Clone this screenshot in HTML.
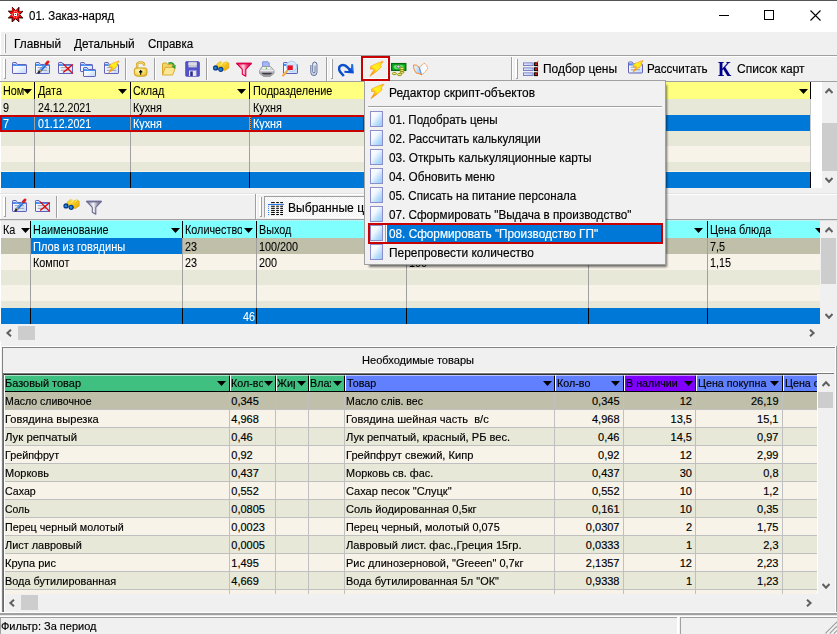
<!DOCTYPE html>
<html><head><meta charset="utf-8"><title>01. Заказ-наряд</title><style>
html,body{margin:0;padding:0}
body{width:837px;height:634px;overflow:hidden;background:#f0f0f0;position:relative;font-family:"Liberation Sans",sans-serif;color:#000}
body div,body svg,body span.t{position:absolute}
.t{white-space:pre;line-height:1;display:block;-webkit-text-stroke:0.16px currentColor}
</style></head><body>
<div style="left:0px;top:0px;width:837px;height:1px;background:#555555;"></div>
<div style="left:0px;top:1px;width:837px;height:31px;background:#ffffff;"></div>
<span class="t" style="font-size:12px;left:29px;top:10.0px;transform:scaleX(0.9592);transform-origin:0 0">01. Заказ-наряд</span>
<svg style="left:7px;top:6px" width="18" height="18" viewBox="0 0 18 18"><g transform="translate(0.5,0.5)"><polygon points="4.6,0.6 8,3.9 11.4,0.6 11.2,4.8 15.4,4.6 12.1,8 15.4,11.4 11.2,11.2 11.4,15.4 8,12.1 4.6,15.4 4.8,11.2 0.6,11.4 3.9,8 0.6,4.6 4.8,4.8" fill="#000" transform="translate(0.35,0.35)"/><polygon points="4.6,0.6 8,3.9 11.4,0.6 11.2,4.8 15.4,4.6 12.1,8 15.4,11.4 11.2,11.2 11.4,15.4 8,12.1 4.6,15.4 4.8,11.2 0.6,11.4 3.9,8 0.6,4.6 4.8,4.8" fill="#ff0000" stroke="#200000" stroke-width="0.3"/><path d="M4.6 0.6 L8 3.9 M11.4 0.6 L11.2 4.8 M15.4 4.6 L12.1 8 M15.4 11.4 H11.4 M11.4 15.4 L8 12.1 M4.6 15.4 V11.2 M0.6 11.4 H4.6 M0.6 4.6 H4.6" stroke="#000" stroke-width="0.7" fill="none"/><path d="M8 4.3 L11.7 8 L8 11.7 L4.3 8Z" fill="none" stroke="#fff" stroke-width="1" stroke-dasharray="0.9 0.85"/><rect x="6.5" y="6.5" width="3" height="3" fill="#fff"/><rect x="7.5" y="7.5" width="1" height="1" fill="#f00"/></g></svg>
<div style="left:719px;top:15px;width:10px;height:1px;background:#000;"></div>
<div style="left:764px;top:10px;width:10px;height:10px;background:transparent;border:1px solid #000;box-sizing:border-box"></div>
<svg style="left:810px;top:10px" width="11" height="11" viewBox="0 0 11 11"><path d="M0.5 0.5L10.5 10.5M10.5 0.5L0.5 10.5" stroke="#000" stroke-width="1.1"/></svg>
<div style="left:0px;top:32px;width:1px;height:580px;background:#ffffff;"></div>
<div style="left:4px;top:34px;width:1px;height:19px;background:#ffffff;"></div>
<div style="left:5px;top:34px;width:1px;height:19px;background:#a0a0a0;"></div>
<span class="t" style="font-size:12px;left:14.3px;top:38.0px;transform:scaleX(0.9865);transform-origin:0 0">Главный</span>
<span class="t" style="font-size:12px;left:74px;top:38.0px;transform:scaleX(0.9845);transform-origin:0 0">Детальный</span>
<span class="t" style="font-size:12px;left:147.5px;top:38.0px;transform:scaleX(0.9601);transform-origin:0 0">Справка</span>
<div style="left:0px;top:55px;width:837px;height:1px;background:#a0a0a0;"></div>
<div style="left:0px;top:56px;width:837px;height:1px;background:#ffffff;"></div>
<div style="left:3px;top:59px;width:2px;height:19px;background:#ffffff;"></div>
<div style="left:5px;top:59px;width:1px;height:20px;background:#a0a0a0;"></div>
<div style="left:4px;top:78px;width:1px;height:1px;background:#a0a0a0;"></div>
<div style="left:125px;top:58px;width:1px;height:22px;background:#a0a0a0;"></div>
<div style="left:126px;top:58px;width:1px;height:22px;background:#ffffff;"></div>
<div style="left:154px;top:58px;width:1px;height:22px;background:#a0a0a0;"></div>
<div style="left:155px;top:58px;width:1px;height:22px;background:#ffffff;"></div>
<div style="left:206px;top:58px;width:1px;height:22px;background:#a0a0a0;"></div>
<div style="left:207px;top:58px;width:1px;height:22px;background:#ffffff;"></div>
<div style="left:326px;top:57px;width:1px;height:24px;background:#a0a0a0;"></div>
<div style="left:327px;top:57px;width:1px;height:24px;background:#ffffff;"></div>
<div style="left:330px;top:59px;width:2px;height:19px;background:#ffffff;"></div>
<div style="left:332px;top:59px;width:1px;height:20px;background:#a0a0a0;"></div>
<div style="left:331px;top:78px;width:1px;height:1px;background:#a0a0a0;"></div>
<div style="left:511px;top:57px;width:1px;height:24px;background:#a0a0a0;"></div>
<div style="left:512px;top:57px;width:1px;height:24px;background:#ffffff;"></div>
<div style="left:515px;top:59px;width:2px;height:19px;background:#ffffff;"></div>
<div style="left:517px;top:59px;width:1px;height:20px;background:#a0a0a0;"></div>
<div style="left:516px;top:78px;width:1px;height:1px;background:#a0a0a0;"></div>
<span class="t" style="font-size:12px;left:543px;top:63.0px;transform:scaleX(0.9978);transform-origin:0 0">Подбор цены</span>
<span class="t" style="font-size:12px;left:646.5px;top:63.0px;transform:scaleX(0.9677);transform-origin:0 0">Рассчитать</span>
<span class="t" style="font-size:12px;left:736.5px;top:63.0px;transform:scaleX(1.0036);transform-origin:0 0">Список карт</span>
<div style="left:361px;top:56px;width:29px;height:25px;background:#f0f0f0;border:2px solid #c80000;box-sizing:border-box;box-shadow:inset 0 0 0 1px #fcffff"></div>
<svg style="left:12px;top:60px" width="18" height="18" viewBox="0 0 18 18"><defs><linearGradient id="g1" x1="0" y1="0" x2="1" y2="1"><stop offset="0" stop-color="#ffffff"/><stop offset="0.5" stop-color="#eef4fd"/><stop offset="1" stop-color="#bcd6f7"/></linearGradient></defs><path d="M0.5 13.0 V3.1 Q0.5 2.5 1.1 2.5 H4.1 L5.3 4.5 H13.9 Q14.5 4.5 14.5 5.1 V12.9 Q14.5 13.5 13.9 13.5 H1.1 Q0.5 13.5 0.5 12.9Z" fill="url(#g1)" stroke="#6262bd" stroke-width="1"/><path d="M1.0 3.7 H4.1 L4.9 5.1 H14.0 V5.9 H1.0Z" fill="#4a93f5"/></svg>
<svg style="left:35px;top:60px" width="18" height="18" viewBox="0 0 18 18"><defs><linearGradient id="g2" x1="0" y1="0" x2="1" y2="1"><stop offset="0" stop-color="#ffffff"/><stop offset="0.5" stop-color="#eef4fd"/><stop offset="1" stop-color="#bcd6f7"/></linearGradient></defs><path d="M0.5 13.0 V3.1 Q0.5 2.5 1.1 2.5 H4.1 L5.3 4.5 H13.9 Q14.5 4.5 14.5 5.1 V12.9 Q14.5 13.5 13.9 13.5 H1.1 Q0.5 13.5 0.5 12.9Z" fill="url(#g2)" stroke="#6262bd" stroke-width="1"/><path d="M1.0 3.7 H4.1 L4.9 5.1 H14.0 V5.9 H1.0Z" fill="#4a93f5"/><path d="M2.7 7.7 H12.1 M2.7 10.3 H12.1" stroke="#9a9aa8" stroke-width="1"/><path d="M4.6 11.6 L11.8 3.3" stroke="#2f6fd6" stroke-width="2.8" stroke-linecap="butt"/><path d="M4.3 11.0 L11.8 2.4" stroke="#7db2f5" stroke-width="0.9"/><path d="M3.0 13.2 L5.0 11.0" stroke="#2a2a2a" stroke-width="2.2"/><path d="M5.0 11.2 L5.9 10.2" stroke="#c8a060" stroke-width="2.4"/><path d="M11.4 3.8 L13.0 1.9" stroke="#e01818" stroke-width="2.8" stroke-linecap="round"/></svg>
<svg style="left:58px;top:60px" width="18" height="18" viewBox="0 0 18 18"><defs><linearGradient id="g3" x1="0" y1="0" x2="1" y2="1"><stop offset="0" stop-color="#ffffff"/><stop offset="0.5" stop-color="#eef4fd"/><stop offset="1" stop-color="#bcd6f7"/></linearGradient></defs><path d="M0.5 13.0 V3.1 Q0.5 2.5 1.1 2.5 H4.1 L5.3 4.5 H13.9 Q14.5 4.5 14.5 5.1 V12.9 Q14.5 13.5 13.9 13.5 H1.1 Q0.5 13.5 0.5 12.9Z" fill="url(#g3)" stroke="#6262bd" stroke-width="1"/><path d="M1.0 3.7 H4.1 L4.9 5.1 H14.0 V5.9 H1.0Z" fill="#4a93f5"/><path d="M2.7 7.7 H12.1 M2.7 10.3 H12.1" stroke="#9a9aa8" stroke-width="1"/><path d="M5 3.6 L14.8 13.6 M14.8 4.4 L5.2 12.4" stroke="#e80000" stroke-width="1.3"/></svg>
<svg style="left:80px;top:60px" width="18" height="18" viewBox="0 0 18 18"><defs><linearGradient id="g4" x1="0" y1="0" x2="1" y2="1"><stop offset="0" stop-color="#ffffff"/><stop offset="0.5" stop-color="#eef4fd"/><stop offset="1" stop-color="#bcd6f7"/></linearGradient></defs><path d="M0.5 11.0 V3.1 Q0.5 2.5 1.1 2.5 H4.1 L5.3 4.5 H11.9 Q12.5 4.5 12.5 5.1 V10.9 Q12.5 11.5 11.9 11.5 H1.1 Q0.5 11.5 0.5 10.9Z" fill="url(#g4)" stroke="#6262bd" stroke-width="1"/><path d="M1.0 3.7 H4.1 L4.9 5.1 H12.0 V5.9 H1.0Z" fill="#4a93f5"/><defs><linearGradient id="g5" x1="0" y1="0" x2="1" y2="1"><stop offset="0" stop-color="#ffffff"/><stop offset="0.5" stop-color="#eef4fd"/><stop offset="1" stop-color="#bcd6f7"/></linearGradient></defs><path d="M3.5 16.0 V8.1 Q3.5 7.5 4.1 7.5 H7.1 L8.3 9.5 H14.9 Q15.5 9.5 15.5 10.1 V15.9 Q15.5 16.5 14.9 16.5 H4.1 Q3.5 16.5 3.5 15.9Z" fill="url(#g5)" stroke="#6262bd" stroke-width="1"/><path d="M4.0 8.7 H7.1 L7.9 10.1 H15.0 V10.9 H4.0Z" fill="#4a93f5"/></svg>
<svg style="left:104px;top:60px" width="18" height="18" viewBox="0 0 18 18"><defs><linearGradient id="g6" x1="0" y1="0" x2="1" y2="1"><stop offset="0" stop-color="#ffffff"/><stop offset="0.5" stop-color="#eef4fd"/><stop offset="1" stop-color="#bcd6f7"/></linearGradient></defs><path d="M0.5 13.0 V3.1 Q0.5 2.5 1.1 2.5 H4.1 L5.3 4.5 H13.9 Q14.5 4.5 14.5 5.1 V12.9 Q14.5 13.5 13.9 13.5 H1.1 Q0.5 13.5 0.5 12.9Z" fill="url(#g6)" stroke="#6262bd" stroke-width="1"/><path d="M1.0 3.7 H4.1 L4.9 5.1 H14.0 V5.9 H1.0Z" fill="#4a93f5"/><path d="M2.7 7.7 H12.1 M2.7 10.3 H12.1" stroke="#9a9aa8" stroke-width="1"/><defs><linearGradient id="g7" x1="0.9" y1="0" x2="0.1" y2="1"><stop offset="0" stop-color="#ffb020"/><stop offset="0.18" stop-color="#ffe818"/><stop offset="0.5" stop-color="#fff020"/><stop offset="0.72" stop-color="#ffb010"/><stop offset="1" stop-color="#f07000"/></linearGradient></defs><path d="M14.96 0.92 L12.08 1.88 L7.76 3.64 L5.12 5.08 L5.12 7.16 L8.08 7.32 L4.56 12.92 L9.68 9.24 L12.88 6.52 L13.84 4.92 L12.88 4.28 L15.20 1.24Z" fill="url(#g7)" stroke="#f59a18" stroke-width="0.6" stroke-linejoin="round"/></svg>
<svg style="left:133px;top:60px" width="18" height="18" viewBox="0 0 18 18"><defs><radialGradient id="g8" cx="0.4" cy="0.35" r="0.75"><stop offset="0" stop-color="#fffbd0"/><stop offset="0.55" stop-color="#f8dc60"/><stop offset="1" stop-color="#e0b030"/></radialGradient></defs><path d="M4.1 9 V5 Q4.1 2.4 7.6 2.4 Q11 2.4 11 4.6 V5.8" fill="none" stroke="#cfa020" stroke-width="2.4"/><path d="M4.1 9 V5 Q4.1 2.4 7.6 2.4 Q11 2.4 11 4.6 V5.6" fill="none" stroke="#fbe27a" stroke-width="0.9"/><path d="M3 8 H12.2 Q14 8 14 10 V13 Q14 16.2 11 16.2 H4.4 Q1.3 16.2 1.3 13 V10 Q1.3 8 3 8Z" fill="url(#g8)" stroke="#cfa020" stroke-width="1"/><path d="M7.7 14.8 V11 M6.2 12.4 L7.7 10.6 L9.2 12.4" fill="none" stroke="#000" stroke-width="1.1"/></svg>
<svg style="left:161px;top:60px" width="18" height="18" viewBox="0 0 18 18"><path d="M1.5 15 V4.2 Q1.5 3 2.6 3 H5.6 L6.8 4.6 H11.5 V7" fill="#f2d468" stroke="#d4a62a" stroke-width="1"/><path d="M1.5 15 L4.2 7.4 H14.6 L11.6 15Z" fill="#fae694" stroke="#d9ad32" stroke-width="1" stroke-linejoin="round"/><path d="M7.4 3.4 Q11.6 1.6 13 5.4" fill="none" stroke="#2ea02e" stroke-width="1.8"/><path d="M10.6 6 L15 5 L13.6 9Z" fill="#2ea02e"/></svg>
<svg style="left:185px;top:60px" width="18" height="18" viewBox="0 0 18 18"><path d="M0.7 2.2 Q0.7 1.6 1.4 1.6 H13.4 L14.4 2.6 V15.6 Q14.4 16.3 13.7 16.3 H1.4 Q0.7 16.3 0.7 15.6Z" fill="#5252cc" stroke="#4a4ab4" stroke-width="0.8"/><rect x="3.4" y="1.8" width="8.4" height="5.6" fill="#c8c8d4"/><path d="M3.4 4 H11.8" stroke="#e6e6ee" stroke-width="1.4"/><rect x="4" y="10.4" width="7.4" height="5.6" fill="#e8e8f0"/><rect x="5.2" y="11.4" width="2.6" height="4.6" fill="#30308a"/><path d="M4 10.4 H11.4 V16 " fill="none" stroke="#8a8ad8" stroke-width="0.8"/></svg>
<svg style="left:212px;top:60px" width="18" height="18" viewBox="0 0 18 18"><defs><linearGradient id="g9" x1="0" y1="0" x2="1" y2="1"><stop offset="0" stop-color="#ffe640"/><stop offset="1" stop-color="#e8a800"/></linearGradient></defs><path d="M4.6 4.2 L8.4 1.4 L11.4 3 L14.6 1.8 L16.8 3.2 V8 L12.6 10.8 L9.6 8.2 L6.2 8.8Z" fill="url(#g9)" stroke="#d8a000" stroke-width="0.6"/><path d="M8.6 1.6 L11.2 3 L8 5.2 M14.6 2 L12.4 4" stroke="#fff6a0" stroke-width="0.8" fill="none"/><circle cx="3.6" cy="7.9" r="2.6" fill="#0a3a8a"/><circle cx="3.4" cy="8.0" r="1.3" fill="#1e8ae0"/><circle cx="8.8" cy="9.3" r="2.6" fill="#0a3a8a"/><circle cx="8.6" cy="9.4" r="1.3" fill="#1e8ae0"/></svg>
<svg style="left:236px;top:60px" width="18" height="18" viewBox="0 0 18 18"><defs><linearGradient id="g10" x1="0" y1="0" x2="1" y2="0"><stop offset="0" stop-color="#e00048"/><stop offset="0.45" stop-color="#ffd0dc"/><stop offset="0.7" stop-color="#e84080"/><stop offset="1" stop-color="#d00040"/></linearGradient></defs><path d="M0.6 3.4 H15.4 L9.8 9.4 V16.3 L6.3 14.2 V9.4Z" fill="url(#g10)" stroke="#dc0046" stroke-width="1.1" stroke-linejoin="round"/><path d="M0.6 3.6 H15.4" stroke="#dc0046" stroke-width="1.6"/></svg>
<svg style="left:259px;top:60px" width="18" height="18" viewBox="0 0 18 18"><defs><linearGradient id="g11" x1="0" y1="0" x2="0" y2="1"><stop offset="0" stop-color="#e8e8ec"/><stop offset="1" stop-color="#9a9aa2"/></linearGradient></defs><path d="M3.6 7 V1.8 H9 L10.2 3 V7Z" fill="#a8b8f4" stroke="#7488e0" stroke-width="0.9"/><path d="M0.6 10.4 L3 6.6 H11.6 L15 10.4 V13.4 L11 16.4 H4.6 L0.6 13.4Z" fill="url(#g11)" stroke="#8c8c94" stroke-width="0.8"/><path d="M3.6 8.2 H11" stroke="#f6f6f8" stroke-width="1.6"/><circle cx="7.4" cy="8.3" r="0.8" fill="#30c030"/><path d="M4.4 14.6 H11.4 L13.6 12.8 H2.2Z" fill="#3a3a40"/><path d="M1 10.6 H14.6" stroke="#fafafa" stroke-width="0.8"/></svg>
<svg style="left:282px;top:60px" width="18" height="18" viewBox="0 0 18 18"><defs><linearGradient id="g12" x1="0" y1="0" x2="1" y2="1"><stop offset="0" stop-color="#ffffff"/><stop offset="0.5" stop-color="#eef4fd"/><stop offset="1" stop-color="#bcd6f7"/></linearGradient></defs><path d="M1.5 13.0 V3.1 Q1.5 2.5 2.1 2.5 H5.1 L6.3 4.5 H14.9 Q15.5 4.5 15.5 5.1 V12.9 Q15.5 13.5 14.9 13.5 H2.1 Q1.5 13.5 1.5 12.9Z" fill="url(#g12)" stroke="#6262bd" stroke-width="1"/><path d="M2.0 3.7 H5.1 L5.9 5.1 H15.0 V5.9 H2.0Z" fill="#4a93f5"/><circle cx="9.6" cy="6.4" r="5.2" fill="#d6e8fb" fill-opacity="0.92" stroke="#a8c8f0" stroke-width="1"/><rect x="5.4" y="5.4" width="5.4" height="4.6" fill="#e81020"/><path d="M5.2 10.8 L1.2 15.4" stroke="#f0a030" stroke-width="2.2" stroke-linecap="round"/><path d="M5.0 10.4 L1.2 14.8" stroke="#fbd890" stroke-width="0.7"/></svg>
<svg style="left:310px;top:60px" width="18" height="18" viewBox="0 0 18 18"><path d="M0.9 5 V12.6 Q0.9 15.5 3.9 15.5 Q6.9 15.5 6.9 12.6 V4.4 Q6.9 2.1 4.6 2.1 Q2.7 2.1 2.7 4.4 V11.8 Q2.7 13 3.9 13 Q5.1 13 5.1 11.8 V5.6" fill="none" stroke="#3f5286" stroke-width="0.9"/><path d="M1.8 5 V12.6 Q1.8 14.6 3.9 14.6 Q6 14.6 6 12.6 V4.4" fill="none" stroke="#b8c6e4" stroke-width="0.8"/></svg>
<svg style="left:338px;top:60px" width="18" height="18" viewBox="0 0 18 18"><path d="M5.8 16 L2 11.6 Q0.3 8.6 1.8 6.4 Q3.8 4.2 6.8 5.4 Q9 6.4 12.8 10.8" fill="none" stroke="#0a4fd0" stroke-width="2.5" stroke-linecap="butt" stroke-linejoin="round"/><path d="M14.1 4.2 L14.7 12.4 L6.4 11.7" fill="none" stroke="#0a4fd0" stroke-width="2" stroke-linejoin="miter"/><path d="M14.6 12.3 L14.2 6.5 L9 11.9Z" fill="#0a4fd0"/><path d="M13.9 5 L14.3 10.5" stroke="#3a8af0" stroke-width="0.9"/></svg>
<svg style="left:369px;top:60px" width="19" height="19" viewBox="0 0 19 19"><g transform="translate(0.3,0.3)"><defs><linearGradient id="g13" x1="0.9" y1="0" x2="0.1" y2="1"><stop offset="0" stop-color="#ffb020"/><stop offset="0.18" stop-color="#ffe818"/><stop offset="0.5" stop-color="#fff020"/><stop offset="0.72" stop-color="#ffb010"/><stop offset="1" stop-color="#f07000"/></linearGradient></defs><path d="M13.50 1.00 L9.90 2.20 L4.50 4.40 L1.20 6.20 L1.20 8.80 L4.90 9.00 L0.50 16.00 L6.90 11.40 L10.90 8.00 L12.10 6.00 L10.90 5.20 L13.80 1.40Z" fill="url(#g13)" stroke="#f59a18" stroke-width="0.6" stroke-linejoin="round"/></g></svg>
<svg style="left:391px;top:60px" width="18" height="18" viewBox="0 0 18 18"><rect x="0.6" y="3.6" width="14.2" height="6.8" fill="#0fb020" stroke="#056c0c" stroke-width="1.3"/><ellipse cx="7.6" cy="7" rx="5" ry="2.3" fill="#60e868"/><ellipse cx="7.4" cy="6.6" rx="1.7" ry="1.5" fill="#e0e0e0" stroke="#505060" stroke-width="0.8"/><g fill="#f2f090" stroke="#8c8800" stroke-width="0.9"><rect x="1.4" y="12.6" width="4" height="2" rx="1"/><rect x="6.6" y="13.6" width="4" height="2" rx="1"/><rect x="9.2" y="11.2" width="3.6" height="2" rx="0.8"/><rect x="9.2" y="9.4" width="3.6" height="2" rx="0.8"/><rect x="9.2" y="7.6" width="3.6" height="2" rx="0.8"/></g></svg>
<svg style="left:413px;top:60px" width="18" height="18" viewBox="0 0 18 18"><defs><linearGradient id="g14" x1="0" y1="0" x2="1" y2="0.5"><stop offset="0" stop-color="#ffffff"/><stop offset="1" stop-color="#9cc8f4"/></linearGradient><linearGradient id="g15" x1="0" y1="0" x2="1" y2="0.3"><stop offset="0" stop-color="#a8d0f6"/><stop offset="0.4" stop-color="#f4f9ff"/><stop offset="1" stop-color="#ffffff"/></linearGradient></defs><path d="M0.4 5 L3.4 5.2 L6.1 7.3 L8.6 14.8 L6 13.6 L3.1 13 L1.1 9.5Z" fill="url(#g14)" stroke="#f58a30" stroke-width="1" stroke-linejoin="round"/><path d="M6.1 7.3 L11.1 3.2 L13.2 4.6 L14.8 8 L12.6 11.4 L9.3 14.6 L8.6 14.8Z" fill="url(#g15)" stroke="#f8a050" stroke-width="1" stroke-linejoin="round" stroke-dasharray="1.6 0.5"/><path d="M6.1 7.3 L8.6 14.8" stroke="#5a98e8" stroke-width="1"/></svg>
<svg style="left:523px;top:60px" width="18" height="18" viewBox="0 0 18 18"><defs><linearGradient id="g16" x1="0" y1="0" x2="1" y2="1"><stop offset="0" stop-color="#f4f8ff"/><stop offset="1" stop-color="#a8c4f0"/></linearGradient></defs><rect x="0.5" y="2.9" width="9.6" height="2.6" fill="url(#g16)" stroke="#7474c4" stroke-width="0.9"/><rect x="11.6" y="2.8" width="2.8" height="2.8" fill="#ff2010" stroke="#000" stroke-width="1"/><path d="M13.4 2.6999999999999997 L15.4 1.0999999999999999" stroke="#ff3020" stroke-width="0.8"/><rect x="0.5" y="7.9" width="9.6" height="2.6" fill="url(#g16)" stroke="#7474c4" stroke-width="0.9"/><rect x="11.6" y="7.800000000000001" width="2.8" height="2.8" fill="#ff2010" stroke="#000" stroke-width="1"/><path d="M13.4 7.7 L15.4 6.1000000000000005" stroke="#ff3020" stroke-width="0.8"/><rect x="0.5" y="12.9" width="9.6" height="2.6" fill="url(#g16)" stroke="#7474c4" stroke-width="0.9"/><rect x="11.6" y="12.8" width="2.8" height="2.8" fill="#ff2010" stroke="#000" stroke-width="1"/><path d="M13.4 12.700000000000001 L15.4 11.1" stroke="#ff3020" stroke-width="0.8"/></svg>
<svg style="left:628px;top:60px" width="18" height="18" viewBox="0 0 18 18"><defs><linearGradient id="g17" x1="0" y1="0" x2="1" y2="1"><stop offset="0" stop-color="#ffffff"/><stop offset="0.5" stop-color="#eef4fd"/><stop offset="1" stop-color="#bcd6f7"/></linearGradient></defs><path d="M0.5 12.5 V2.6 Q0.5 2.0 1.1 2.0 H4.1 L5.3 4.0 H13.9 Q14.5 4.0 14.5 4.6 V12.4 Q14.5 13.0 13.9 13.0 H1.1 Q0.5 13.0 0.5 12.4Z" fill="url(#g17)" stroke="#6262bd" stroke-width="1"/><path d="M1.0 3.2 H4.1 L4.9 4.6 H14.0 V5.4 H1.0Z" fill="#4a93f5"/><path d="M2.7 7.2 H12.1 M2.7 9.8 H12.1" stroke="#9a9aa8" stroke-width="1"/><defs><linearGradient id="g18" x1="0.9" y1="0" x2="0.1" y2="1"><stop offset="0" stop-color="#ffb020"/><stop offset="0.18" stop-color="#ffe818"/><stop offset="0.5" stop-color="#fff020"/><stop offset="0.72" stop-color="#ffb010"/><stop offset="1" stop-color="#f07000"/></linearGradient></defs><path d="M14.90 0.51 L12.09 1.45 L7.88 3.16 L5.30 4.57 L5.30 6.60 L8.19 6.75 L4.76 12.21 L9.75 8.62 L12.87 5.97 L13.80 4.41 L12.87 3.79 L15.13 0.82Z" fill="url(#g18)" stroke="#f59a18" stroke-width="0.6" stroke-linejoin="round"/></svg>
<span class="t" style="left:717.8px;top:59.4px;font-family:'Liberation Serif',serif;font-weight:bold;font-size:20px;color:#00008c;transform:scaleX(0.85);transform-origin:0 0">K</span>
<div style="left:0px;top:81px;width:837px;height:1px;background:#a0a0a0;"></div>
<div style="left:1px;top:82px;width:810px;height:17px;background:#ffff80;"></div>
<div style="left:811px;top:82px;width:11px;height:106px;background:#ffffff;"></div>
<div style="left:822px;top:82px;width:15px;height:106px;background:#f0f0f0;"></div>
<div style="left:1px;top:99px;width:810px;height:16px;background:#e8e8d8;"></div>
<div style="left:1px;top:115px;width:810px;height:16px;background:#0078d7;"></div>
<div style="left:1px;top:131px;width:810px;height:15px;background:#e8e8d8;"></div>
<div style="left:1px;top:146px;width:810px;height:16px;background:#f7f3e8;"></div>
<div style="left:1px;top:162px;width:810px;height:9px;background:#e8e8d8;"></div>
<div style="left:1px;top:171px;width:810px;height:1px;background:#f7f3e8;"></div>
<div style="left:1px;top:172px;width:810px;height:16px;background:#0078d7;"></div>
<div style="left:34px;top:82px;width:1px;height:17px;background:#000;"></div>
<div style="left:34px;top:99px;width:1px;height:73px;background:#a0a0a0;"></div>
<div style="left:34px;top:172px;width:1px;height:16px;background:#000;"></div>
<div style="left:130px;top:82px;width:1px;height:17px;background:#000;"></div>
<div style="left:130px;top:99px;width:1px;height:73px;background:#a0a0a0;"></div>
<div style="left:130px;top:172px;width:1px;height:16px;background:#000;"></div>
<div style="left:249px;top:82px;width:1px;height:17px;background:#000;"></div>
<div style="left:249px;top:99px;width:1px;height:73px;background:#a0a0a0;"></div>
<div style="left:249px;top:172px;width:1px;height:16px;background:#000;"></div>
<div style="left:810px;top:82px;width:1px;height:17px;background:#000;"></div>
<div style="left:810px;top:99px;width:1px;height:73px;background:#a0a0a0;"></div>
<div style="left:810px;top:172px;width:1px;height:16px;background:#000;"></div>
<div style="left:810px;top:99px;width:1px;height:73px;background:#c8c8c8;"></div>
<div style="left:2.8px;top:84.75px;width:21px;height:14.5px;overflow:hidden"><span class="t" style="font-size:12.5px;left:0;top:0;-webkit-text-stroke:0.08px currentColor;transform:scaleX(0.8650);transform-origin:0 0">Ном</span></div>
<span class="t" style="font-size:12.5px;left:37.8px;top:84.75px;-webkit-text-stroke:0.08px currentColor;transform:scaleX(0.8650);transform-origin:0 0">Дата</span>
<span class="t" style="font-size:12.5px;left:133.3px;top:84.75px;-webkit-text-stroke:0.08px currentColor;transform:scaleX(0.8650);transform-origin:0 0">Склад</span>
<span class="t" style="font-size:12.5px;left:252.8px;top:84.75px;-webkit-text-stroke:0.08px currentColor;transform:scaleX(0.8716);transform-origin:0 0">Подразделение</span>
<svg style="left:23.3px;top:89.3px" width="9" height="5" viewBox="0 0 9 5"><path d="M0 0H9L4.5 5Z" fill="#000"/></svg>
<svg style="left:118px;top:89.3px" width="9" height="5" viewBox="0 0 9 5"><path d="M0 0H9L4.5 5Z" fill="#000"/></svg>
<svg style="left:237.3px;top:89.3px" width="9" height="5" viewBox="0 0 9 5"><path d="M0 0H9L4.5 5Z" fill="#000"/></svg>
<svg style="left:799px;top:89.3px" width="9" height="5" viewBox="0 0 9 5"><path d="M0 0H9L4.5 5Z" fill="#000"/></svg>
<span class="t" style="font-size:12.5px;left:2.8px;top:101.75px;-webkit-text-stroke:0.08px currentColor;transform:scaleX(0.8650);transform-origin:0 0">9</span>
<span class="t" style="font-size:12.5px;left:37.8px;top:101.75px;-webkit-text-stroke:0.08px currentColor;transform:scaleX(0.8503);transform-origin:0 0">24.12.2021</span>
<span class="t" style="font-size:12.5px;left:133.3px;top:101.75px;-webkit-text-stroke:0.08px currentColor;transform:scaleX(0.8650);transform-origin:0 0">Кухня</span>
<span class="t" style="font-size:12.5px;left:252.8px;top:101.75px;-webkit-text-stroke:0.08px currentColor;transform:scaleX(0.8650);transform-origin:0 0">Кухня</span>
<span class="t" style="font-size:12.5px;left:2.8px;top:117.75px;color:#fff;-webkit-text-stroke:0.08px currentColor;transform:scaleX(0.8650);transform-origin:0 0">7</span>
<span class="t" style="font-size:12.5px;left:37.8px;top:117.75px;color:#fff;-webkit-text-stroke:0.08px currentColor;transform:scaleX(0.8503);transform-origin:0 0">01.12.2021</span>
<span class="t" style="font-size:12.5px;left:133.3px;top:117.75px;color:#fff;-webkit-text-stroke:0.08px currentColor;transform:scaleX(0.8650);transform-origin:0 0">Кухня</span>
<span class="t" style="font-size:12.5px;left:252.8px;top:117.75px;color:#fff;-webkit-text-stroke:0.08px currentColor;transform:scaleX(0.8650);transform-origin:0 0">Кухня</span>
<div style="left:250px;top:117px;width:1px;height:13px;background:repeating-linear-gradient(#ff8a28 0 1px,#30405a 1px 2px);"></div>
<div style="left:0px;top:115px;width:365px;height:17px;background:transparent;border:2px solid #c80000;box-sizing:border-box"></div>
<svg style="left:825px;top:87px" width="8" height="8" viewBox="0 0 8 8"><path d="M0.5 6 L4 2.3 L7.5 6" fill="none" stroke="#606060" stroke-width="2"/></svg>
<svg style="left:825px;top:176px" width="8" height="8" viewBox="0 0 8 8"><path d="M0.5 2 L4 5.7 L7.5 2" fill="none" stroke="#606060" stroke-width="2"/></svg>
<div style="left:822px;top:123px;width:15px;height:48px;background:#cdcdcd;"></div>
<div style="left:0px;top:193px;width:837px;height:1px;background:#e3e3e3;"></div>
<div style="left:0px;top:194px;width:837px;height:1px;background:#ffffff;"></div>
<div style="left:3px;top:197px;width:2px;height:19px;background:#ffffff;"></div>
<div style="left:5px;top:197px;width:1px;height:20px;background:#a0a0a0;"></div>
<div style="left:4px;top:216px;width:1px;height:1px;background:#a0a0a0;"></div>
<div style="left:56px;top:196px;width:1px;height:22px;background:#a0a0a0;"></div>
<div style="left:57px;top:196px;width:1px;height:22px;background:#ffffff;"></div>
<div style="left:255px;top:194px;width:1px;height:25px;background:#a0a0a0;"></div>
<div style="left:256px;top:194px;width:1px;height:25px;background:#ffffff;"></div>
<div style="left:259px;top:197px;width:2px;height:19px;background:#ffffff;"></div>
<div style="left:261px;top:197px;width:1px;height:20px;background:#a0a0a0;"></div>
<div style="left:260px;top:216px;width:1px;height:1px;background:#a0a0a0;"></div>
<svg style="left:12px;top:198px" width="18" height="18" viewBox="0 0 18 18"><defs><linearGradient id="g19" x1="0" y1="0" x2="1" y2="1"><stop offset="0" stop-color="#ffffff"/><stop offset="0.5" stop-color="#eef4fd"/><stop offset="1" stop-color="#bcd6f7"/></linearGradient></defs><path d="M0.5 13.0 V3.1 Q0.5 2.5 1.1 2.5 H4.1 L5.3 4.5 H13.9 Q14.5 4.5 14.5 5.1 V12.9 Q14.5 13.5 13.9 13.5 H1.1 Q0.5 13.5 0.5 12.9Z" fill="url(#g19)" stroke="#6262bd" stroke-width="1"/><path d="M1.0 3.7 H4.1 L4.9 5.1 H14.0 V5.9 H1.0Z" fill="#4a93f5"/><path d="M2.7 7.7 H12.1 M2.7 10.3 H12.1" stroke="#9a9aa8" stroke-width="1"/><path d="M4.6 11.6 L11.8 3.3" stroke="#2f6fd6" stroke-width="2.8" stroke-linecap="butt"/><path d="M4.3 11.0 L11.8 2.4" stroke="#7db2f5" stroke-width="0.9"/><path d="M3.0 13.2 L5.0 11.0" stroke="#2a2a2a" stroke-width="2.2"/><path d="M5.0 11.2 L5.9 10.2" stroke="#c8a060" stroke-width="2.4"/><path d="M11.4 3.8 L13.0 1.9" stroke="#e01818" stroke-width="2.8" stroke-linecap="round"/></svg>
<svg style="left:35px;top:198px" width="18" height="18" viewBox="0 0 18 18"><defs><linearGradient id="g20" x1="0" y1="0" x2="1" y2="1"><stop offset="0" stop-color="#ffffff"/><stop offset="0.5" stop-color="#eef4fd"/><stop offset="1" stop-color="#bcd6f7"/></linearGradient></defs><path d="M0.5 13.0 V3.1 Q0.5 2.5 1.1 2.5 H4.1 L5.3 4.5 H13.9 Q14.5 4.5 14.5 5.1 V12.9 Q14.5 13.5 13.9 13.5 H1.1 Q0.5 13.5 0.5 12.9Z" fill="url(#g20)" stroke="#6262bd" stroke-width="1"/><path d="M1.0 3.7 H4.1 L4.9 5.1 H14.0 V5.9 H1.0Z" fill="#4a93f5"/><path d="M2.7 7.7 H12.1 M2.7 10.3 H12.1" stroke="#9a9aa8" stroke-width="1"/><path d="M5 3.6 L14.8 13.6 M14.8 4.4 L5.2 12.4" stroke="#e80000" stroke-width="1.3"/></svg>
<svg style="left:62px;top:198px" width="19" height="19" viewBox="0 0 19 19"><g transform="translate(0.4,0)"><defs><linearGradient id="g21" x1="0" y1="0" x2="1" y2="1"><stop offset="0" stop-color="#ffe640"/><stop offset="1" stop-color="#e8a800"/></linearGradient></defs><path d="M4.6 4.2 L8.4 1.4 L11.4 3 L14.6 1.8 L16.8 3.2 V8 L12.6 10.8 L9.6 8.2 L6.2 8.8Z" fill="url(#g21)" stroke="#d8a000" stroke-width="0.6"/><path d="M8.6 1.6 L11.2 3 L8 5.2 M14.6 2 L12.4 4" stroke="#fff6a0" stroke-width="0.8" fill="none"/><circle cx="3.6" cy="7.9" r="2.6" fill="#0a3a8a"/><circle cx="3.4" cy="8.0" r="1.3" fill="#1e8ae0"/><circle cx="8.8" cy="9.3" r="2.6" fill="#0a3a8a"/><circle cx="8.6" cy="9.4" r="1.3" fill="#1e8ae0"/></g></svg>
<svg style="left:86px;top:198px" width="18" height="18" viewBox="0 0 18 18"><defs><linearGradient id="g22" x1="0" y1="0" x2="1" y2="0"><stop offset="0" stop-color="#707088"/><stop offset="0.45" stop-color="#f4f4f8"/><stop offset="0.7" stop-color="#a0a0b0"/><stop offset="1" stop-color="#606078"/></linearGradient></defs><path d="M0.6 3.4 H15.4 L9.8 9.4 V16.3 L6.3 14.2 V9.4Z" fill="url(#g22)" stroke="#6c6c94" stroke-width="1.1" stroke-linejoin="round"/><path d="M0.6 3.6 H15.4" stroke="#6c6c94" stroke-width="1.6"/></svg>
<div style="left:264px;top:196px;width:110px;height:22px;background:#f8f8f8;background-image:conic-gradient(#fff 25%,#f0f0f0 0 50%,#fff 0 75%,#f0f0f0 0);background-size:2px 2px;border:1px solid;border-color:#a0a0a0 #fff #fff #a0a0a0;box-sizing:border-box"></div>
<svg style="left:268px;top:202px" width="18" height="18" viewBox="0 0 18 18"><rect x="0" y="2" width="15.9" height="1" fill="#2a78e8"/><rect x="3.1" y="0.1" width="3.7" height="1.05" fill="#000"/><rect x="8.2" y="0.1" width="2.7" height="1.05" fill="#000"/><rect x="12.2" y="0.1" width="2.8" height="1.05" fill="#000"/><rect x="0" y="3.7" width="1.1" height="1.05" fill="#2a78e8"/><rect x="3.1" y="3.7" width="3.7" height="1.05" fill="#000"/><rect x="8.2" y="3.7" width="2.7" height="1.05" fill="#000"/><rect x="12.2" y="3.7" width="2.8" height="1.05" fill="#000"/><rect x="0" y="5.8" width="1.1" height="1.05" fill="#2a78e8"/><rect x="3.1" y="5.8" width="3.7" height="1.05" fill="#000"/><rect x="8.2" y="5.8" width="2.7" height="1.05" fill="#000"/><rect x="12.2" y="5.8" width="2.8" height="1.05" fill="#000"/><rect x="0" y="7.9" width="1.1" height="1.05" fill="#2a78e8"/><rect x="3.1" y="7.9" width="3.7" height="1.05" fill="#000"/><rect x="8.2" y="7.9" width="2.7" height="1.05" fill="#000"/><rect x="12.2" y="7.9" width="2.8" height="1.05" fill="#000"/><rect x="0" y="9.9" width="1.1" height="1.05" fill="#2a78e8"/><rect x="3.1" y="9.9" width="3.7" height="1.05" fill="#000"/><rect x="8.2" y="9.9" width="2.7" height="1.05" fill="#000"/><rect x="12.2" y="9.9" width="2.8" height="1.05" fill="#000"/><rect x="0" y="12.0" width="1.1" height="1.05" fill="#2a78e8"/><rect x="3.1" y="12.0" width="3.7" height="1.05" fill="#000"/><rect x="8.2" y="12.0" width="2.7" height="1.05" fill="#000"/><rect x="12.2" y="12.0" width="2.8" height="1.05" fill="#000"/></svg>
<span class="t" style="font-size:12px;left:288.3px;top:202.0px;transform:scaleX(1.0061);transform-origin:0 0">Выбранные цены</span>
<div style="left:0px;top:219px;width:837px;height:1px;background:#a0a0a0;"></div>
<div style="left:0px;top:220px;width:837px;height:1px;background:#e0e0e0;"></div>
<div style="left:31px;top:220px;width:789px;height:1px;background:#b4f6f6;"></div>
<div style="left:1px;top:221px;width:30px;height:17px;background:#f0f0f0;"></div>
<div style="left:31px;top:221px;width:789px;height:17px;background:#80ffff;"></div>
<div style="left:1px;top:238px;width:819px;height:16px;background:#bfbfaa;"></div>
<div style="left:31px;top:238px;width:151px;height:16px;background:#0078d7;"></div>
<div style="left:1px;top:254px;width:819px;height:16px;background:#f7f3e8;"></div>
<div style="left:1px;top:270px;width:819px;height:15px;background:#e8e8d8;"></div>
<div style="left:1px;top:285px;width:819px;height:16px;background:#f7f3e8;"></div>
<div style="left:1px;top:301px;width:819px;height:7px;background:#e8e8d8;"></div>
<div style="left:1px;top:308px;width:819px;height:16px;background:#0078d7;"></div>
<div style="left:30px;top:221px;width:1px;height:17px;background:#000;"></div>
<div style="left:30px;top:238px;width:1px;height:70px;background:#a0a0a0;"></div>
<div style="left:30px;top:308px;width:1px;height:16px;background:#000;"></div>
<div style="left:182px;top:221px;width:1px;height:17px;background:#000;"></div>
<div style="left:182px;top:238px;width:1px;height:70px;background:#a0a0a0;"></div>
<div style="left:182px;top:308px;width:1px;height:16px;background:#000;"></div>
<div style="left:256px;top:221px;width:1px;height:17px;background:#000;"></div>
<div style="left:256px;top:238px;width:1px;height:70px;background:#a0a0a0;"></div>
<div style="left:256px;top:308px;width:1px;height:16px;background:#000;"></div>
<div style="left:406px;top:221px;width:1px;height:17px;background:#000;"></div>
<div style="left:406px;top:238px;width:1px;height:70px;background:#a0a0a0;"></div>
<div style="left:406px;top:308px;width:1px;height:16px;background:#000;"></div>
<div style="left:588px;top:221px;width:1px;height:17px;background:#000;"></div>
<div style="left:588px;top:238px;width:1px;height:70px;background:#a0a0a0;"></div>
<div style="left:588px;top:308px;width:1px;height:16px;background:#000;"></div>
<div style="left:707px;top:221px;width:1px;height:17px;background:#000;"></div>
<div style="left:707px;top:238px;width:1px;height:70px;background:#a0a0a0;"></div>
<div style="left:707px;top:308px;width:1px;height:16px;background:#000;"></div>
<span class="t" style="font-size:12.5px;left:2.8px;top:223.75px;-webkit-text-stroke:0.08px currentColor;transform:scaleX(0.8650);transform-origin:0 0">Ка</span>
<svg style="left:20.6px;top:228px" width="9" height="5" viewBox="0 0 9 5"><path d="M0 0H9L4.5 5Z" fill="#000"/></svg>
<div style="left:30px;top:221px;width:1px;height:17px;background:#000;"></div>
<div style="left:31px;top:226px;width:2px;height:8px;background:#80ffff;"></div>
<span class="t" style="font-size:12.5px;left:33.2px;top:223.75px;-webkit-text-stroke:0.08px currentColor;transform:scaleX(0.8724);transform-origin:0 0">Наименование</span>
<svg style="left:171px;top:228px" width="9" height="5" viewBox="0 0 9 5"><path d="M0 0H9L4.5 5Z" fill="#000"/></svg>
<div style="left:185.3px;top:223.75px;width:57px;height:14.5px;overflow:hidden"><span class="t" style="font-size:12.5px;left:0;top:0;-webkit-text-stroke:0.08px currentColor;transform:scaleX(0.8650);transform-origin:0 0">Количество</span></div>
<svg style="left:244px;top:228px" width="9" height="5" viewBox="0 0 9 5"><path d="M0 0H9L4.5 5Z" fill="#000"/></svg>
<span class="t" style="font-size:12.5px;left:259.3px;top:223.75px;-webkit-text-stroke:0.08px currentColor;transform:scaleX(0.8650);transform-origin:0 0">Выход</span>
<svg style="left:694px;top:228px" width="9" height="5" viewBox="0 0 9 5"><path d="M0 0H9L4.5 5Z" fill="#000"/></svg>
<span class="t" style="font-size:12.5px;left:710.3px;top:223.75px;-webkit-text-stroke:0.08px currentColor;transform:scaleX(0.8650);transform-origin:0 0">Цена блюда</span>
<svg style="left:815px;top:228px" width="9" height="5" viewBox="0 0 9 5"><path d="M0 0H9L4.5 5Z" fill="#000"/></svg>
<span class="t" style="font-size:12.5px;left:33.2px;top:240.75px;color:#fff;-webkit-text-stroke:0.08px currentColor;transform:scaleX(0.8846);transform-origin:0 0">Плов из говядины</span>
<span class="t" style="font-size:12.5px;left:185.3px;top:240.75px;-webkit-text-stroke:0.08px currentColor;transform:scaleX(0.8650);transform-origin:0 0">23</span>
<span class="t" style="font-size:12.5px;left:259.3px;top:240.75px;-webkit-text-stroke:0.08px currentColor;transform:scaleX(0.8650);transform-origin:0 0">100/200</span>
<span class="t" style="font-size:12.5px;left:710.3px;top:240.75px;-webkit-text-stroke:0.08px currentColor;transform:scaleX(0.8650);transform-origin:0 0">7,5</span>
<span class="t" style="font-size:12.5px;left:33.2px;top:256.75px;-webkit-text-stroke:0.08px currentColor;transform:scaleX(0.8650);transform-origin:0 0">Компот</span>
<span class="t" style="font-size:12.5px;left:185.3px;top:256.75px;-webkit-text-stroke:0.08px currentColor;transform:scaleX(0.8650);transform-origin:0 0">23</span>
<span class="t" style="font-size:12.5px;left:259.3px;top:256.75px;-webkit-text-stroke:0.08px currentColor;transform:scaleX(0.8650);transform-origin:0 0">200</span>
<span class="t" style="font-size:12.5px;left:710.3px;top:256.75px;-webkit-text-stroke:0.08px currentColor;transform:scaleX(0.8650);transform-origin:0 0">1,15</span>
<span class="t" style="font-size:12.5px;left:408.8px;top:256.75px;-webkit-text-stroke:0.08px currentColor;transform:scaleX(0.8650);transform-origin:0 0">100</span>
<span class="t" style="font-size:12.5px;right:582.5px;top:310.75px;color:#fff;-webkit-text-stroke:0.08px currentColor;transform:scaleX(0.8650);transform-origin:100% 0">46</span>
<div style="left:820px;top:221px;width:17px;height:103px;background:#f0f0f0;"></div>
<svg style="left:825px;top:226px" width="8" height="8" viewBox="0 0 8 8"><path d="M0.5 6 L4 2.3 L7.5 6" fill="none" stroke="#606060" stroke-width="2"/></svg>
<svg style="left:825px;top:312px" width="8" height="8" viewBox="0 0 8 8"><path d="M0.5 2 L4 5.7 L7.5 2" fill="none" stroke="#606060" stroke-width="2"/></svg>
<div style="left:821px;top:238px;width:15px;height:46px;background:#cdcdcd;"></div>
<div style="left:0px;top:324px;width:837px;height:17px;background:#f0f0f0;"></div>
<svg style="left:5px;top:328.5px" width="8" height="8" viewBox="0 0 8 8"><path d="M6 0.7 L2.4 4 L6 7.3" fill="none" stroke="#606060" stroke-width="2"/></svg>
<svg style="left:807.5px;top:328.5px" width="8" height="8" viewBox="0 0 8 8"><path d="M2 0.7 L5.6 4 L2 7.3" fill="none" stroke="#606060" stroke-width="2"/></svg>
<div style="left:18px;top:326px;width:17px;height:14px;background:#cdcdcd;"></div>
<div style="left:2px;top:346px;width:835px;height:1px;background:#ffffff;"></div>
<div style="left:2px;top:347px;width:833px;height:1px;background:#828282;"></div>
<div style="left:2px;top:347px;width:1px;height:265px;background:#828282;"></div>
<span class="t" style="font-size:11px;left:362px;top:354.5px;transform:scaleX(1.0048);transform-origin:0 0">Необходимые товары</span>
<div style="left:3px;top:372px;width:831px;height:1px;background:#ffffff;"></div>
<div style="left:3px;top:373px;width:831px;height:1px;background:#7a7a7a;"></div>
<div style="left:3px;top:373px;width:1px;height:239px;background:#696969;"></div>
<div style="left:4px;top:374px;width:813px;height:1px;background:#303030;"></div>
<div style="left:4px;top:375px;width:813px;height:16px;background:#ffffff;"></div>
<div style="left:5px;top:375px;width:224px;height:16px;background:#40c080;"></div>
<div style="left:229px;top:375px;width:1px;height:16px;background:#000;"></div>
<div style="left:231px;top:375px;width:44px;height:16px;background:#40c080;"></div>
<div style="left:275px;top:375px;width:1px;height:16px;background:#000;"></div>
<div style="left:277px;top:375px;width:31px;height:16px;background:#40c080;"></div>
<div style="left:308px;top:375px;width:1px;height:16px;background:#000;"></div>
<div style="left:310px;top:375px;width:34px;height:16px;background:#40c080;"></div>
<div style="left:344px;top:375px;width:1px;height:16px;background:#000;"></div>
<div style="left:346px;top:375px;width:208px;height:16px;background:#6080ff;"></div>
<div style="left:554px;top:375px;width:1px;height:16px;background:#000;"></div>
<div style="left:556px;top:375px;width:67px;height:16px;background:#6080ff;"></div>
<div style="left:623px;top:375px;width:1px;height:16px;background:#000;"></div>
<div style="left:625px;top:375px;width:70px;height:16px;background:#8000ff;"></div>
<div style="left:695px;top:375px;width:1px;height:16px;background:#000;"></div>
<div style="left:697px;top:375px;width:85px;height:16px;background:#6080ff;"></div>
<div style="left:782px;top:375px;width:1px;height:16px;background:#000;"></div>
<div style="left:784px;top:375px;width:33px;height:16px;background:#6080ff;"></div>
<div style="left:4px;top:375px;width:813px;height:1px;background:rgba(255,255,255,0.55);"></div>
<div style="left:4px;top:391px;width:813px;height:1px;background:#000;"></div>
<div style="left:4px;top:392px;width:813px;height:17px;background:#bfbfaa;"></div>
<div style="left:4px;top:409px;width:813px;height:1px;background:#c0c0c0;"></div>
<div style="left:4px;top:410px;width:813px;height:17px;background:#f7f3e8;"></div>
<div style="left:4px;top:427px;width:813px;height:1px;background:#c0c0c0;"></div>
<div style="left:4px;top:428px;width:813px;height:17px;background:#e8e8d8;"></div>
<div style="left:4px;top:445px;width:813px;height:1px;background:#c0c0c0;"></div>
<div style="left:4px;top:446px;width:813px;height:17px;background:#f7f3e8;"></div>
<div style="left:4px;top:463px;width:813px;height:1px;background:#c0c0c0;"></div>
<div style="left:4px;top:464px;width:813px;height:17px;background:#e8e8d8;"></div>
<div style="left:4px;top:481px;width:813px;height:1px;background:#c0c0c0;"></div>
<div style="left:4px;top:482px;width:813px;height:17px;background:#f7f3e8;"></div>
<div style="left:4px;top:499px;width:813px;height:1px;background:#c0c0c0;"></div>
<div style="left:4px;top:500px;width:813px;height:17px;background:#e8e8d8;"></div>
<div style="left:4px;top:517px;width:813px;height:1px;background:#c0c0c0;"></div>
<div style="left:4px;top:518px;width:813px;height:17px;background:#f7f3e8;"></div>
<div style="left:4px;top:535px;width:813px;height:1px;background:#c0c0c0;"></div>
<div style="left:4px;top:536px;width:813px;height:17px;background:#e8e8d8;"></div>
<div style="left:4px;top:553px;width:813px;height:1px;background:#c0c0c0;"></div>
<div style="left:4px;top:554px;width:813px;height:17px;background:#f7f3e8;"></div>
<div style="left:4px;top:571px;width:813px;height:1px;background:#c0c0c0;"></div>
<div style="left:4px;top:572px;width:813px;height:17px;background:#e8e8d8;"></div>
<div style="left:4px;top:589px;width:813px;height:1px;background:#c0c0c0;"></div>
<div style="left:4px;top:590px;width:813px;height:4px;background:#f7f3e8;"></div>
<div style="left:229px;top:392px;width:1px;height:202px;background:#c0c0c0;"></div>
<div style="left:275px;top:392px;width:1px;height:202px;background:#c0c0c0;"></div>
<div style="left:308px;top:392px;width:1px;height:202px;background:#c0c0c0;"></div>
<div style="left:344px;top:392px;width:1px;height:202px;background:#c0c0c0;"></div>
<div style="left:554px;top:392px;width:1px;height:202px;background:#c0c0c0;"></div>
<div style="left:623px;top:392px;width:1px;height:202px;background:#c0c0c0;"></div>
<div style="left:695px;top:392px;width:1px;height:202px;background:#c0c0c0;"></div>
<div style="left:782px;top:392px;width:1px;height:202px;background:#c0c0c0;"></div>
<span class="t" style="font-size:11px;left:4.7px;top:395.5px;transform:scaleX(0.9576);transform-origin:0 0">Масло сливочное</span>
<span class="t" style="font-size:11px;left:231.3px;top:395.5px;transform:scaleX(1.0000);transform-origin:0 0">0,345</span>
<span class="t" style="font-size:11px;left:346px;top:395.5px;transform:scaleX(0.9591);transform-origin:0 0">Масло слів. вес</span>
<span class="t" style="font-size:11px;right:217.5px;top:395.5px;transform:scaleX(1.0000);transform-origin:100% 0">0,345</span>
<span class="t" style="font-size:11px;right:145px;top:395.5px;transform:scaleX(1.0000);transform-origin:100% 0">12</span>
<span class="t" style="font-size:11px;right:58.5px;top:395.5px;transform:scaleX(1.0000);transform-origin:100% 0">26,19</span>
<span class="t" style="font-size:11px;left:4.7px;top:413.5px;transform:scaleX(1.0097);transform-origin:0 0">Говядина вырезка</span>
<span class="t" style="font-size:11px;left:231.3px;top:413.5px;transform:scaleX(1.0000);transform-origin:0 0">4,968</span>
<span class="t" style="font-size:11px;left:346px;top:413.5px;transform:scaleX(1.0067);transform-origin:0 0">Говядина шейная часть  в/с</span>
<span class="t" style="font-size:11px;right:217.5px;top:413.5px;transform:scaleX(1.0000);transform-origin:100% 0">4,968</span>
<span class="t" style="font-size:11px;right:145px;top:413.5px;transform:scaleX(1.0000);transform-origin:100% 0">13,5</span>
<span class="t" style="font-size:11px;right:58.5px;top:413.5px;transform:scaleX(1.0000);transform-origin:100% 0">15,1</span>
<span class="t" style="font-size:11px;left:4.7px;top:431.5px;transform:scaleX(1.0343);transform-origin:0 0">Лук репчатый</span>
<span class="t" style="font-size:11px;left:231.3px;top:431.5px;transform:scaleX(1.0000);transform-origin:0 0">0,46</span>
<span class="t" style="font-size:11px;left:346px;top:431.5px;transform:scaleX(1.0104);transform-origin:0 0">Лук репчатый, красный, РБ вес.</span>
<span class="t" style="font-size:11px;right:217.5px;top:431.5px;transform:scaleX(1.0000);transform-origin:100% 0">0,46</span>
<span class="t" style="font-size:11px;right:145px;top:431.5px;transform:scaleX(1.0000);transform-origin:100% 0">14,5</span>
<span class="t" style="font-size:11px;right:58.5px;top:431.5px;transform:scaleX(1.0000);transform-origin:100% 0">0,97</span>
<span class="t" style="font-size:11px;left:4.7px;top:449.5px;transform:scaleX(0.9807);transform-origin:0 0">Грейпфрут</span>
<span class="t" style="font-size:11px;left:231.3px;top:449.5px;transform:scaleX(1.0000);transform-origin:0 0">0,92</span>
<span class="t" style="font-size:11px;left:346px;top:449.5px;transform:scaleX(1.0125);transform-origin:0 0">Грейпфрут свежий, Кипр</span>
<span class="t" style="font-size:11px;right:217.5px;top:449.5px;transform:scaleX(1.0000);transform-origin:100% 0">0,92</span>
<span class="t" style="font-size:11px;right:145px;top:449.5px;transform:scaleX(1.0000);transform-origin:100% 0">12</span>
<span class="t" style="font-size:11px;right:58.5px;top:449.5px;transform:scaleX(1.0000);transform-origin:100% 0">2,99</span>
<span class="t" style="font-size:11px;left:4.7px;top:467.5px;transform:scaleX(0.9965);transform-origin:0 0">Морковь</span>
<span class="t" style="font-size:11px;left:231.3px;top:467.5px;transform:scaleX(1.0000);transform-origin:0 0">0,437</span>
<span class="t" style="font-size:11px;left:346px;top:467.5px;transform:scaleX(0.9865);transform-origin:0 0">Морковь св. фас.</span>
<span class="t" style="font-size:11px;right:217.5px;top:467.5px;transform:scaleX(1.0000);transform-origin:100% 0">0,437</span>
<span class="t" style="font-size:11px;right:145px;top:467.5px;transform:scaleX(1.0000);transform-origin:100% 0">30</span>
<span class="t" style="font-size:11px;right:58.5px;top:467.5px;transform:scaleX(1.0000);transform-origin:100% 0">0,8</span>
<span class="t" style="font-size:11px;left:4.7px;top:485.5px;transform:scaleX(0.9655);transform-origin:0 0">Сахар</span>
<span class="t" style="font-size:11px;left:231.3px;top:485.5px;transform:scaleX(1.0000);transform-origin:0 0">0,552</span>
<span class="t" style="font-size:11px;left:346px;top:485.5px;transform:scaleX(1.0026);transform-origin:0 0">Сахар песок "Слуцк"</span>
<span class="t" style="font-size:11px;right:217.5px;top:485.5px;transform:scaleX(1.0000);transform-origin:100% 0">0,552</span>
<span class="t" style="font-size:11px;right:145px;top:485.5px;transform:scaleX(1.0000);transform-origin:100% 0">10</span>
<span class="t" style="font-size:11px;right:58.5px;top:485.5px;transform:scaleX(1.0000);transform-origin:100% 0">1,2</span>
<span class="t" style="font-size:11px;left:4.7px;top:503.5px;transform:scaleX(0.9467);transform-origin:0 0">Соль</span>
<span class="t" style="font-size:11px;left:231.3px;top:503.5px;transform:scaleX(1.0000);transform-origin:0 0">0,0805</span>
<span class="t" style="font-size:11px;left:346px;top:503.5px;transform:scaleX(1.0118);transform-origin:0 0">Соль йодированная 0,5кг</span>
<span class="t" style="font-size:11px;right:217.5px;top:503.5px;transform:scaleX(1.0000);transform-origin:100% 0">0,161</span>
<span class="t" style="font-size:11px;right:145px;top:503.5px;transform:scaleX(1.0000);transform-origin:100% 0">10</span>
<span class="t" style="font-size:11px;right:58.5px;top:503.5px;transform:scaleX(1.0000);transform-origin:100% 0">0,35</span>
<span class="t" style="font-size:11px;left:4.7px;top:521.5px;transform:scaleX(0.9752);transform-origin:0 0">Перец черный молотый</span>
<span class="t" style="font-size:11px;left:231.3px;top:521.5px;transform:scaleX(1.0000);transform-origin:0 0">0,0023</span>
<span class="t" style="font-size:11px;left:346px;top:521.5px;transform:scaleX(0.9893);transform-origin:0 0">Перец черный, молотый 0,075</span>
<span class="t" style="font-size:11px;right:217.5px;top:521.5px;transform:scaleX(1.0000);transform-origin:100% 0">0,0307</span>
<span class="t" style="font-size:11px;right:145px;top:521.5px;transform:scaleX(1.0000);transform-origin:100% 0">2</span>
<span class="t" style="font-size:11px;right:58.5px;top:521.5px;transform:scaleX(1.0000);transform-origin:100% 0">1,75</span>
<span class="t" style="font-size:11px;left:4.7px;top:539.5px;transform:scaleX(0.9914);transform-origin:0 0">Лист лавровый</span>
<span class="t" style="font-size:11px;left:231.3px;top:539.5px;transform:scaleX(1.0000);transform-origin:0 0">0,0005</span>
<span class="t" style="font-size:11px;left:346px;top:539.5px;transform:scaleX(1.0116);transform-origin:0 0">Лавровый лист. фас.,Греция 15гр.</span>
<span class="t" style="font-size:11px;right:217.5px;top:539.5px;transform:scaleX(1.0000);transform-origin:100% 0">0,0333</span>
<span class="t" style="font-size:11px;right:145px;top:539.5px;transform:scaleX(1.0000);transform-origin:100% 0">1</span>
<span class="t" style="font-size:11px;right:58.5px;top:539.5px;transform:scaleX(1.0000);transform-origin:100% 0">2,3</span>
<span class="t" style="font-size:11px;left:4.7px;top:557.5px;transform:scaleX(1.0040);transform-origin:0 0">Крупа рис</span>
<span class="t" style="font-size:11px;left:231.3px;top:557.5px;transform:scaleX(1.0000);transform-origin:0 0">1,495</span>
<span class="t" style="font-size:11px;left:346px;top:557.5px;transform:scaleX(0.9955);transform-origin:0 0">Рис длинозерновой, "Greeen" 0,7кг</span>
<span class="t" style="font-size:11px;right:217.5px;top:557.5px;transform:scaleX(1.0000);transform-origin:100% 0">2,1357</span>
<span class="t" style="font-size:11px;right:145px;top:557.5px;transform:scaleX(1.0000);transform-origin:100% 0">12</span>
<span class="t" style="font-size:11px;right:58.5px;top:557.5px;transform:scaleX(1.0000);transform-origin:100% 0">2,23</span>
<span class="t" style="font-size:11px;left:4.7px;top:575.5px;transform:scaleX(0.9893);transform-origin:0 0">Вода бутилированная</span>
<span class="t" style="font-size:11px;left:231.3px;top:575.5px;transform:scaleX(1.0000);transform-origin:0 0">4,669</span>
<span class="t" style="font-size:11px;left:346px;top:575.5px;transform:scaleX(0.9940);transform-origin:0 0">Вода бутилированная 5л "ОК"</span>
<span class="t" style="font-size:11px;right:217.5px;top:575.5px;transform:scaleX(1.0000);transform-origin:100% 0">0,9338</span>
<span class="t" style="font-size:11px;right:145px;top:575.5px;transform:scaleX(1.0000);transform-origin:100% 0">1</span>
<span class="t" style="font-size:11px;right:58.5px;top:575.5px;transform:scaleX(1.0000);transform-origin:100% 0">1,23</span>
<span class="t" style="font-size:11px;left:4.7px;top:377.5px;transform:scaleX(0.9973);transform-origin:0 0">Базовый товар</span>
<svg style="left:217px;top:381px" width="9" height="5" viewBox="0 0 9 5"><path d="M0 0H9L4.5 5Z" fill="#000"/></svg>
<div style="left:231.3px;top:377.5px;width:32px;height:13px;overflow:hidden"><span class="t" style="font-size:11px;left:0;top:0;transform:scaleX(0.9750);transform-origin:0 0">Кол-во</span></div>
<svg style="left:264px;top:381px" width="9" height="5" viewBox="0 0 9 5"><path d="M0 0H9L4.5 5Z" fill="#000"/></svg>
<div style="left:277.3px;top:377.5px;width:18px;height:13px;overflow:hidden"><span class="t" style="font-size:11px;left:0;top:0;transform:scaleX(0.9750);transform-origin:0 0">Жир</span></div>
<svg style="left:297px;top:381px" width="9" height="5" viewBox="0 0 9 5"><path d="M0 0H9L4.5 5Z" fill="#000"/></svg>
<div style="left:310.3px;top:377.5px;width:21px;height:13px;overflow:hidden"><span class="t" style="font-size:11px;left:0;top:0;transform:scaleX(0.9750);transform-origin:0 0">Влаж</span></div>
<svg style="left:333px;top:381px" width="9" height="5" viewBox="0 0 9 5"><path d="M0 0H9L4.5 5Z" fill="#000"/></svg>
<span class="t" style="font-size:11px;left:347px;top:377.5px;transform:scaleX(0.9750);transform-origin:0 0">Товар</span>
<svg style="left:543px;top:381px" width="9" height="5" viewBox="0 0 9 5"><path d="M0 0H9L4.5 5Z" fill="#000"/></svg>
<span class="t" style="font-size:11px;left:557px;top:377.5px;transform:scaleX(0.9750);transform-origin:0 0">Кол-во</span>
<svg style="left:611px;top:381px" width="9" height="5" viewBox="0 0 9 5"><path d="M0 0H9L4.5 5Z" fill="#000"/></svg>
<span class="t" style="font-size:11px;left:626px;top:377.5px;transform:scaleX(0.9750);transform-origin:0 0">В наличии</span>
<svg style="left:684px;top:381px" width="9" height="5" viewBox="0 0 9 5"><path d="M0 0H9L4.5 5Z" fill="#000"/></svg>
<span class="t" style="font-size:11px;left:698px;top:377.5px;transform:scaleX(0.9750);transform-origin:0 0">Цена покупна</span>
<svg style="left:770px;top:381px" width="9" height="5" viewBox="0 0 9 5"><path d="M0 0H9L4.5 5Z" fill="#000"/></svg>
<div style="left:785px;top:377.5px;width:32px;height:13px;overflow:hidden"><span class="t" style="font-size:11px;left:0;top:0;transform:scaleX(0.9750);transform-origin:0 0">Цена с</span></div>
<div style="left:817px;top:375px;width:1px;height:219px;background:#ffffff;"></div>
<div style="left:818px;top:375px;width:17px;height:219px;background:#f0f0f0;"></div>
<svg style="left:822px;top:380px" width="8" height="8" viewBox="0 0 8 8"><path d="M0.5 6 L4 2.3 L7.5 6" fill="none" stroke="#606060" stroke-width="2"/></svg>
<svg style="left:822px;top:582px" width="8" height="8" viewBox="0 0 8 8"><path d="M0.5 2 L4 5.7 L7.5 2" fill="none" stroke="#606060" stroke-width="2"/></svg>
<div style="left:818px;top:392px;width:15px;height:16px;background:#cdcdcd;"></div>
<div style="left:4px;top:594px;width:830px;height:17px;background:#f0f0f0;"></div>
<svg style="left:8px;top:598.5px" width="8" height="8" viewBox="0 0 8 8"><path d="M6 0.7 L2.4 4 L6 7.3" fill="none" stroke="#606060" stroke-width="2"/></svg>
<svg style="left:805px;top:598.5px" width="8" height="8" viewBox="0 0 8 8"><path d="M2 0.7 L5.6 4 L2 7.3" fill="none" stroke="#606060" stroke-width="2"/></svg>
<div style="left:21px;top:595px;width:17px;height:15px;background:#cdcdcd;"></div>
<div style="left:835px;top:347px;width:1px;height:266px;background:#ffffff;"></div>
<div style="left:836px;top:346px;width:1px;height:269px;background:#a0a0a0;"></div>
<div style="left:4px;top:375px;width:1px;height:236px;background:#ffffff;"></div>
<div style="left:0px;top:612px;width:837px;height:1px;background:#ffffff;"></div>
<div style="left:0px;top:613px;width:837px;height:2px;background:#a0a0a0;"></div>
<div style="left:0px;top:615px;width:837px;height:1px;background:#e8e8e8;"></div>
<div style="left:0px;top:616px;width:837px;height:1px;background:#ffffff;"></div>
<div style="left:0px;top:617px;width:677px;height:1px;background:#a0a0a0;"></div>
<div style="left:677px;top:617px;width:2px;height:17px;background:#ffffff;"></div>
<div style="left:680px;top:617px;width:157px;height:1px;background:#a0a0a0;"></div>
<div style="left:680px;top:617px;width:1px;height:17px;background:#a0a0a0;"></div>
<span class="t" style="font-size:11px;left:0.9px;top:620.5px;transform:scaleX(0.9998);transform-origin:0 0">Фильтр: За период</span>
<div style="left:0px;top:617px;width:1px;height:17px;background:#a0a0a0;"></div>
<svg style="left:824px;top:620px" width="13" height="14" viewBox="0 0 13 14"><path d="M13 2L1.5 13.5M13 6.3L5.8 13.5M13 10.6L10 13.6" stroke="#a0a0a0" stroke-width="1.3"/><path d="M13 3.2L2.7 13.5M13 7.5L7 13.5M13 11.8L11.2 13.6" stroke="#ffffff" stroke-width="0.7"/></svg>
<div style="left:369px;top:85px;width:298px;height:182px;background:rgba(0,0,0,0.55);filter:blur(1.3px)"></div>
<div style="left:364px;top:80px;width:302px;height:185px;background:#f1f1f1;border:1px solid #a0a0a0;box-sizing:border-box"></div>
<div style="left:368px;top:106px;width:294px;height:1px;background:#a0a0a0;"></div>
<div style="left:368px;top:107px;width:294px;height:1px;background:#ffffff;"></div>
<svg style="left:370px;top:83px" width="19" height="19" viewBox="0 0 19 19"><g transform="translate(0.7,0.7)"><defs><linearGradient id="g23" x1="0.9" y1="0" x2="0.1" y2="1"><stop offset="0" stop-color="#ffb020"/><stop offset="0.18" stop-color="#ffe818"/><stop offset="0.5" stop-color="#fff020"/><stop offset="0.72" stop-color="#ffb010"/><stop offset="1" stop-color="#f07000"/></linearGradient></defs><path d="M12.80 0.39 L9.31 1.55 L4.07 3.69 L0.87 5.43 L0.87 7.95 L4.46 8.15 L0.19 14.94 L6.40 10.48 L10.28 7.18 L11.45 5.24 L10.28 4.46 L13.09 0.78Z" fill="url(#g23)" stroke="#f59a18" stroke-width="0.6" stroke-linejoin="round"/></g></svg>
<div style="left:361px;top:56px;width:29px;height:25px;background:transparent;border:2px solid #c80000;box-sizing:border-box"></div>
<span class="t" style="font-size:12px;left:389.3px;top:87.0px;transform:scaleX(0.9950);transform-origin:0 0">Редактор скрипт-объектов</span>
<span class="t" style="font-size:12px;left:389.3px;top:114.0px;transform:scaleX(0.9659);transform-origin:0 0">01. Подобрать цены</span>
<svg style="left:370px;top:111px" width="13" height="16" viewBox="0 0 13 16"><defs><linearGradient id="pg0" x1="0" y1="0" x2="1" y2="1"><stop offset="0" stop-color="#ffffff"/><stop offset="0.38" stop-color="#f2f8ff"/><stop offset="0.7" stop-color="#b4dcfa"/><stop offset="1" stop-color="#8ccaf6"/></linearGradient></defs><rect x="0.5" y="0.5" width="12" height="15" fill="url(#pg0)" stroke="#8e8ecc"/></svg>
<span class="t" style="font-size:12px;left:389.3px;top:133.0px;transform:scaleX(0.9711);transform-origin:0 0">02. Рассчитать калькуляции</span>
<svg style="left:370px;top:130px" width="13" height="16" viewBox="0 0 13 16"><defs><linearGradient id="pg1" x1="0" y1="0" x2="1" y2="1"><stop offset="0" stop-color="#ffffff"/><stop offset="0.38" stop-color="#f2f8ff"/><stop offset="0.7" stop-color="#b4dcfa"/><stop offset="1" stop-color="#8ccaf6"/></linearGradient></defs><rect x="0.5" y="0.5" width="12" height="15" fill="url(#pg1)" stroke="#8e8ecc"/></svg>
<span class="t" style="font-size:12px;left:389.3px;top:152.0px;transform:scaleX(0.9863);transform-origin:0 0">03. Открыть калькуляционные карты</span>
<svg style="left:370px;top:149px" width="13" height="16" viewBox="0 0 13 16"><defs><linearGradient id="pg2" x1="0" y1="0" x2="1" y2="1"><stop offset="0" stop-color="#ffffff"/><stop offset="0.38" stop-color="#f2f8ff"/><stop offset="0.7" stop-color="#b4dcfa"/><stop offset="1" stop-color="#8ccaf6"/></linearGradient></defs><rect x="0.5" y="0.5" width="12" height="15" fill="url(#pg2)" stroke="#8e8ecc"/></svg>
<span class="t" style="font-size:12px;left:389.3px;top:171.0px;transform:scaleX(0.9784);transform-origin:0 0">04. Обновить меню</span>
<svg style="left:370px;top:168px" width="13" height="16" viewBox="0 0 13 16"><defs><linearGradient id="pg3" x1="0" y1="0" x2="1" y2="1"><stop offset="0" stop-color="#ffffff"/><stop offset="0.38" stop-color="#f2f8ff"/><stop offset="0.7" stop-color="#b4dcfa"/><stop offset="1" stop-color="#8ccaf6"/></linearGradient></defs><rect x="0.5" y="0.5" width="12" height="15" fill="url(#pg3)" stroke="#8e8ecc"/></svg>
<span class="t" style="font-size:12px;left:389.3px;top:190.0px;transform:scaleX(0.9644);transform-origin:0 0">05. Списать на питание персонала</span>
<svg style="left:370px;top:187px" width="13" height="16" viewBox="0 0 13 16"><defs><linearGradient id="pg4" x1="0" y1="0" x2="1" y2="1"><stop offset="0" stop-color="#ffffff"/><stop offset="0.38" stop-color="#f2f8ff"/><stop offset="0.7" stop-color="#b4dcfa"/><stop offset="1" stop-color="#8ccaf6"/></linearGradient></defs><rect x="0.5" y="0.5" width="12" height="15" fill="url(#pg4)" stroke="#8e8ecc"/></svg>
<span class="t" style="font-size:12px;left:389.3px;top:209.0px;transform:scaleX(0.9751);transform-origin:0 0">07. Сформировать "Выдача в производство"</span>
<svg style="left:370px;top:206px" width="13" height="16" viewBox="0 0 13 16"><defs><linearGradient id="pg5" x1="0" y1="0" x2="1" y2="1"><stop offset="0" stop-color="#ffffff"/><stop offset="0.38" stop-color="#f2f8ff"/><stop offset="0.7" stop-color="#b4dcfa"/><stop offset="1" stop-color="#8ccaf6"/></linearGradient></defs><rect x="0.5" y="0.5" width="12" height="15" fill="url(#pg5)" stroke="#8e8ecc"/></svg>
<div style="left:368px;top:223px;width:295px;height:21px;background:transparent;border:2px solid #c80000;box-sizing:border-box"></div>
<div style="left:387px;top:225px;width:274px;height:17px;background:#0078d7;"></div>
<div style="left:385px;top:225px;width:1px;height:17px;background:#a0a0a0;"></div>
<div style="left:386px;top:225px;width:1px;height:17px;background:#ffffff;"></div>
<span class="t" style="font-size:12px;left:389.3px;top:228.0px;color:#fff;transform:scaleX(0.9810);transform-origin:0 0">08. Сформировать "Производство ГП"</span>
<svg style="left:370px;top:225px" width="13" height="16" viewBox="0 0 13 16"><defs><linearGradient id="pg6" x1="0" y1="0" x2="1" y2="1"><stop offset="0" stop-color="#ffffff"/><stop offset="0.38" stop-color="#f2f8ff"/><stop offset="0.7" stop-color="#b4dcfa"/><stop offset="1" stop-color="#8ccaf6"/></linearGradient></defs><rect x="0.5" y="0.5" width="12" height="15" fill="url(#pg6)" stroke="#8e8ecc"/></svg>
<span class="t" style="font-size:12px;left:389.3px;top:247.0px;transform:scaleX(0.9940);transform-origin:0 0">Перепровести количество</span>
<svg style="left:370px;top:244px" width="13" height="16" viewBox="0 0 13 16"><defs><linearGradient id="pg7" x1="0" y1="0" x2="1" y2="1"><stop offset="0" stop-color="#ffffff"/><stop offset="0.38" stop-color="#f2f8ff"/><stop offset="0.7" stop-color="#b4dcfa"/><stop offset="1" stop-color="#8ccaf6"/></linearGradient></defs><rect x="0.5" y="0.5" width="12" height="15" fill="url(#pg7)" stroke="#8e8ecc"/></svg>
</body></html>
